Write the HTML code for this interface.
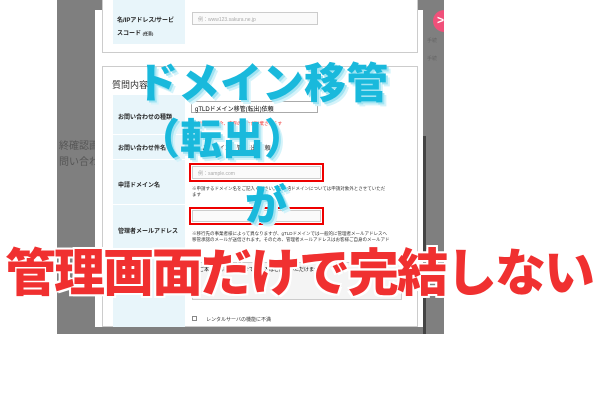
<!DOCTYPE html>
<html><head><meta charset="utf-8"><style>
*{margin:0;padding:0;box-sizing:border-box}
body{width:610px;height:415px;background:#fff;position:relative;overflow:hidden;font-family:"Liberation Sans","Noto Sans CJK JP",sans-serif}
.a{position:absolute}
.g{left:57px;top:0;width:387px;height:334px;background:#7f7f7f}
.m{left:95px;top:10px;width:328px;height:317px;background:#fff}
.card{border:1px solid #ccc;background:#fff}
.lab{background:#e8f5fa}
.t{font-size:6px;color:#222;font-weight:bold;white-space:nowrap}
.s{font-size:4.5px;color:#333;white-space:nowrap}
.inp{border:1px solid #ccc;background:#fafafa;font-size:5px;color:#aaa;padding:3px 5px}
.red{border:2px solid #e00}
.cy{font-weight:900;color:#19b9dc;font-size:42px;white-space:nowrap;text-shadow:2px 2px 0 #9fe3f2,4px 4px 0 #d4f3fa}
.rd{font-weight:900;color:#f03030;font-size:51px;white-space:nowrap;letter-spacing:-2px;text-shadow:-2px -2px 0 #fff,2px -2px 0 #fff,-2px 2px 0 #fff,2px 2px 0 #fff}
</style></head><body>
<div class="a g"></div>
<div class="a" style="left:59px;top:137px;font-size:10px;color:#555">終確認画</div>
<div class="a" style="left:59px;top:153px;font-size:10px;color:#555">問い合わせ</div>
<div class="a" style="left:427px;top:37px;font-size:5px;color:#666">手続</div>
<div class="a" style="left:427px;top:55px;font-size:5px;color:#666">手続</div>
<div class="a" style="left:433px;top:10px;width:22px;height:22px;border-radius:50%;background:#f0507a"></div>
<div class="a" style="left:444px;top:0;width:166px;height:415px;background:#fff"></div>
<div class="a" style="left:437px;top:13px;color:#fff;font-size:12px;font-weight:bold">&gt;</div>
<div class="a" style="left:423px;top:136px;width:3px;height:198px;background:#444"></div>
<div class="a m"></div>
<div class="a card" style="left:102px;top:0;width:316px;height:53px;border-top:none"></div>
<div class="a lab" style="left:113px;top:0;width:72px;height:44px"></div>
<div class="a t" style="left:117px;top:15px">名/IPアドレス/サービ</div>
<div class="a t" style="left:117px;top:28px">スコード <span style="font-size:4px">(任意)</span></div>
<div class="a inp" style="left:192px;top:12px;width:126px;height:13px">例：www123.sakura.ne.jp</div>
<div class="a card" style="left:102px;top:66px;width:316px;height:261px"></div>
<div class="a" style="left:112px;top:78px;font-size:9px;color:#333">質問内容</div>
<div class="a lab" style="left:113px;top:95px;width:72px;height:232px"></div>
<div class="a" style="left:113px;top:134px;width:72px;height:1px;background:#fff"></div>
<div class="a" style="left:113px;top:159px;width:72px;height:1px;background:#fff"></div>
<div class="a" style="left:113px;top:204px;width:72px;height:1px;background:#fff"></div>
<div class="a t" style="left:118px;top:112px">お問い合わせの種類</div>
<div class="a t" style="left:118px;top:143px">お問い合わせ件名</div>
<div class="a t" style="left:118px;top:180px">申請ドメイン名</div>
<div class="a t" style="left:118px;top:226px">管理者メールアドレス</div>
<div class="a" style="left:191px;top:101px;width:127px;height:12px;border:1px solid #aaa;font-size:6px;padding:2px 3px;background:#fff">gTLDドメイン移管(転出)依頼</div>
<div class="a s" style="left:192px;top:121px;color:#e33">※変更する場合、内容の入力が破棄されます</div>
<div class="a" style="left:192px;top:143px;font-size:6px;color:#333">gTLDドメイン移管(転出)依頼</div>
<div class="a red" style="left:189px;top:163px;width:135px;height:19px"><div class="inp" style="margin:1px;height:13px">例：sample.com</div></div>
<div class="a s" style="left:192px;top:186px">※申請するドメイン名をご記入ください。日本語ドメインについては申請対象外とさせていただ</div>
<div class="a s" style="left:192px;top:192px">ます</div>
<div class="a red" style="left:189px;top:207px;width:135px;height:18px"><div class="inp" style="margin:1px;height:12px"></div></div>
<div class="a s" style="left:192px;top:231px">※移行先の事業者様によって異なりますが、gTLDドメインでは一般的に管理者メールアドレスへ</div>
<div class="a s" style="left:192px;top:237px">移管承認のメールが送信されます。そのため、管理者メールアドレスはお客様ご自身のメールアド</div>
<div class="a" style="left:192px;top:262px;width:210px;height:38px;border:1px solid #ccc;background:#f4f4f4;font-size:5px;padding:3px">■ご本人のお問い合わせでの記入はご記入いただけません。</div>
<div class="a" style="left:192px;top:316px;width:5px;height:5px;border:1px solid #888"></div>
<div class="a s" style="left:206px;top:316px;font-size:5px">レンタルサーバの機能に不満</div>
<div class="a cy" style="left:136px;top:50px">ドメイン移管</div>
<div class="a cy" style="left:138px;top:106px">（転出）</div>
<div class="a cy" style="left:245px;top:172px">が</div>
<div class="a rd" style="left:5px;top:232px">管理画面だけで完結しない</div>
</body></html>
